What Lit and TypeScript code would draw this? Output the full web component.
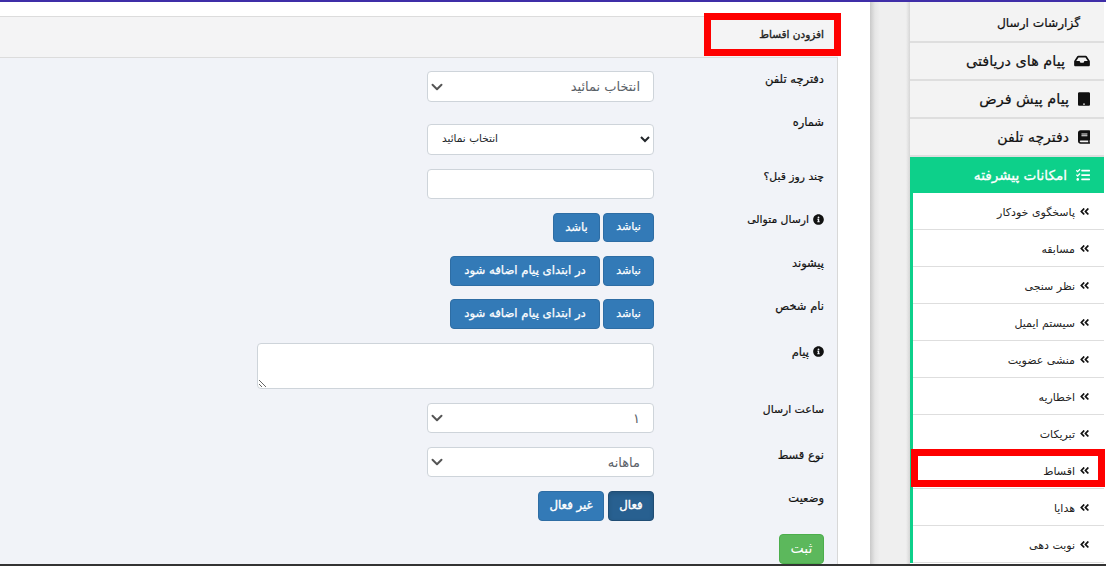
import { LitElement, html, css, svg } from "lit";
import { customElement } from "lit/decorators.js";

const P = {
  inbox: ["0 0 576 512", "M567.938 243.908L462.25 85.374A48.003 48.003 0 0 0 422.311 64H153.689a48 48 0 0 0-39.938 21.374L8.062 243.908A47.994 47.994 0 0 0 0 270.533V400c0 26.51 21.49 48 48 48h480c26.51 0 48-21.49 48-48V270.533a47.994 47.994 0 0 0-8.062-26.625zM162.252 128h251.497l85.333 128H376l-32 64H232l-32-64H76.918l85.334-128z"],
  tablet: ["0 0 448 512", "M400 0H48C21.5 0 0 21.5 0 48v416c0 26.5 21.5 48 48 48h352c26.5 0 48-21.5 48-48V48c0-26.5-21.5-48-48-48zM224 480c-17.7 0-32-14.3-32-32s14.3-32 32-32 32 14.3 32 32-14.3 32-32 32z"],
  book: ["0 0 448 512", "M448 360V24c0-13.3-10.7-24-24-24H96C43 0 0 43 0 96v320c0 53 43 96 96 96h328c13.3 0 24-10.7 24-24v-16c0-7.5-3.5-14.3-8.9-18.7-4.2-15.4-4.2-59.3 0-74.7 5.4-4.3 8.9-11.1 8.9-18.6zM128 134c0-3.3 2.7-6 6-6h212c3.3 0 6 2.7 6 6v20c0 3.3-2.7 6-6 6H134c-3.3 0-6-2.7-6-6v-20zm0 64c0-3.3 2.7-6 6-6h212c3.3 0 6 2.7 6 6v20c0 3.3-2.7 6-6 6H134c-3.3 0-6-2.7-6-6v-20zm253.4 250H96c-17.7 0-32-14.3-32-32 0-17.6 14.4-32 32-32h285.4c-1.9 17.1-1.9 46.9 0 64z"],
  tasks: ["0 0 512 512", "M139.61 35.5a12 12 0 0 0-17 0L58.93 98.81l-22.7-22.12a12 12 0 0 0-17 0L3.53 92.41a12 12 0 0 0 0 17l47.59 47.4a12.78 12.78 0 0 0 17.61 0l15.59-15.62L156.52 69a12.09 12.09 0 0 0 .09-17zm0 159.19a12 12 0 0 0-17 0l-63.68 63.72-22.7-22.1a12 12 0 0 0-17 0L3.53 252a12 12 0 0 0 0 17L51 316.5a12.77 12.77 0 0 0 17.6 0l15.7-15.69 72.2-72.22a12 12 0 0 0 .09-16.9zM64 368c-26.49 0-48.59 21.5-48.59 48S37.53 464 64 464a48 48 0 0 0 0-96zm432 16H208a16 16 0 0 0-16 16v32a16 16 0 0 0 16 16h288a16 16 0 0 0 16-16v-32a16 16 0 0 0-16-16zm0-320H208a16 16 0 0 0-16 16v32a16 16 0 0 0 16 16h288a16 16 0 0 0 16-16V80a16 16 0 0 0-16-16zm0 160H208a16 16 0 0 0-16 16v32a16 16 0 0 0 16 16h288a16 16 0 0 0 16-16v-32a16 16 0 0 0-16-16z"],
  info: ["0 0 512 512", "M256 8C119.043 8 8 119.083 8 256c0 136.997 111.043 248 248 248s248-111.003 248-248C504 119.083 392.957 8 256 8zm0 110c23.196 0 42 18.804 42 42s-18.804 42-42 42-42-18.804-42-42 18.804-42 42-42zm56 254c0 6.627-5.373 12-12 12h-88c-6.627 0-12-5.373-12-12v-24c0-6.627 5.373-12 12-12h12v-64h-12c-6.627 0-12-5.373-12-12v-24c0-6.627 5.373-12 12-12h64c6.627 0 12 5.373 12 12v100h12c6.627 0 12 5.373 12 12v24z"],
  dbl: ["0 0 448 512", "M223.7 239l136-136c9.4-9.4 24.6-9.4 33.9 0l22.6 22.6c9.4 9.4 9.4 24.6 0 33.9L319.9 256l96.4 96.4c9.4 9.4 9.4 24.6 0 33.9L393.7 409c-9.4 9.4-24.6 9.4-33.9 0l-136-136c-9.5-9.4-9.5-24.6-.1-34zm-192 34l136 136c9.4 9.4 24.6 9.4 33.9 0l22.6-22.6c9.4-9.4 9.4-24.6 0-33.9L127.9 256l96.4-96.4c9.4-9.4 9.4-24.6 0-33.9L201.7 103c-9.4-9.4-24.6-9.4-33.9 0l-136 136c-9.5 9.4-9.5 24.6-.1 34z"],
};
type IconName = keyof typeof P;
const icon = (n: IconName, cls: string) =>
  html`<svg class=${cls} viewBox=${P[n][0]} fill="currentColor">${svg`<path d=${P[n][1]}></path>`}</svg>`;

const chevron = html`<svg class="chev" viewBox="0 0 16 16" fill="none" stroke="#555" stroke-width="2.6" stroke-linecap="round" stroke-linejoin="round"><path d="M2 5l6 6 6-6"></path></svg>`;
const fakeSelect = (t: string, cls = "") => html`<div class="sel ${cls}"><span>${t}</span>${chevron}</div>`;
const subs = ["پاسخگوی خودکار", "مسابقه", "نظر سنجی", "سیستم ایمیل", "منشی عضویت", "اخطاریه", "تبریکات", "اقساط", "هدایا", "نوبت دهی"];

@customElement("app-root")
export class AppRoot extends LitElement {
  static styles = css`
    :host { display: flex; flex-direction: column; width: 1106px; height: 566px; overflow: hidden; background: #fff; font-family: "DejaVu Sans", "Liberation Sans", sans-serif; color: #212529; position: relative; }
    .top { height: 2px; background: #3f2ea8; flex: none; }
    .content { flex: 1; min-height: 0; display: flex; overflow: hidden; }
    .bottom { height: 2px; flex: none; background: #333; }
    .main { width: 838px; flex: none; padding-top: 14px; direction: rtl; }
    .head { height: 40px; box-sizing: content-box; background: #f4f4f5; border-top: 1px solid #dcdcdc; border-bottom: 1px solid #dcdcdc; display: flex; align-items: center; padding-right: 14px; font-size: 10.5px; color: #222; -webkit-text-stroke: .35px #222; position: relative; }
    .head span { margin-bottom: 6px; }
    .mark { position: absolute; border: 7px solid #fe0000; box-sizing: border-box; pointer-events: none; }
    .mark.a { right: -3px; top: -4px; width: 137px; height: 43px; }
    .body { background: #f1f3f8; border-right: 1px solid #d8d8d8; padding: 13px 13px 0 0; height: 520px; box-sizing: border-box; }
    .row { display: flex; margin-bottom: 14px; }
    .row.g22 { margin-bottom: 22px; }
    .row.g13 { margin-bottom: 13px; }
    .lbl { width: 170px; flex: none; font-size: 11.5px; line-height: 18px; color: #111; -webkit-text-stroke: .2px #111; display: flex; gap: 4px; align-items: flex-start; margin-top: -2px; }
    .lbl.nar { font-size: 10.8px; }
    .info { width: 11px; height: 11px; margin-top: 3px; flex: none; }
    .lbl.first { margin-top: -1px; }
    .lbl.up { margin-top: -11px; }
    .lbl.z1 { margin-top: -1px; }
    .lbl.z0 { margin-top: 0; }
    .sel, .inp, select, textarea { width: 227px; box-sizing: border-box; border: 1px solid #ced4da; border-radius: 4px; background: #fff; font: inherit; }
    .sel { height: 31px; display: flex; align-items: center; justify-content: space-between; padding: 0 13px 0 3px; font-size: 13px; color: #5a6168; }
    .sel.h30 { height: 30px; }
    .chev { width: 12px; height: 12px; flex: none; }
    select { height: 31px; direction: ltr; font-size: 10.5px; color: #212529; padding: 0 10px 3px; display: block; text-align: left; }
    .inp { height: 30px; display: block; }
    textarea { width: 397px; height: 46px; display: block; resize: both; }
    .btns { display: flex; gap: 3px; }
    .btns.g4 { gap: 4px; }
    .btn { height: 30px; box-sizing: border-box; border: 1px solid #2e6da4; border-radius: 4px; background: #337ab7; color: #fff; font: inherit; font-size: 11.7px; -webkit-text-stroke: .25px #fff; padding: 0 0 2px; display: flex; align-items: center; justify-content: center; }
    .btn.h29 { height: 29px; }
    .w51 { width: 51px; font-size: 11px; }
    .w47 { width: 47px; }
    .w150 { width: 150px; }
    .w46 { width: 46px; }
    .w66 { width: 66px; }
    .strong { -webkit-text-stroke: .4px #fff; }
    .btn.active { background: #286090; border-color: #204d74; box-shadow: inset 0 2px 4px rgba(0,0,0,.13); }
    .save { background: #5cb85c; border-color: #4cae4c; width: 45px; padding: 0 0 3px; font-size: 14px; -webkit-text-stroke: 0; }
    .gap { width: 32px; flex: none; }
    .gutter { width: 40px; flex: none; background: linear-gradient(to right, #c9c9c9 0, #e6e6e6 5px, #efefef 10px, #efefef 36px, #d6d6d6 40px); }
    .side { width: 194px; flex: none; direction: rtl; font-size: 14.4px; color: #111; }
    .item { height: 36px; background: #f3f3f3; border-bottom: 2px solid #dedede; display: flex; align-items: center; gap: 9px; padding-right: 14px; -webkit-text-stroke: .2px #111; }
    .item.book { font-size: 14px; }
    .item.first { padding-right: 24px; padding-top: 3px; box-sizing: border-box; height: 41px; font-size: 12.2px; }
    .ic { width: 14px; height: 14px; flex: none; color: #111; }
    .ic.w { width: 16px; }
    .ic.n { width: 12px; }
    .adv { border-left: 3px solid #0dd08a; }
    .adv-head { height: 36px; background: #0dd08a; margin-left: -3px; color: #fff; font-size: 13.6px; -webkit-text-stroke: .3px #fff; display: flex; align-items: center; gap: 9px; padding-right: 14px; }
    .adv-head .ic { color: #fff; }
    .sub { height: 36px; background: #fff; border-bottom: 1px solid #dedede; display: flex; align-items: center; gap: 4px; padding-right: 14px; font-size: 11px; color: #222; position: relative; }
    .sub span { margin-top: 2px; }
    .dbl { width: 11px; height: 11px; flex: none; color: #111; }
    .mark.b { left: -2px; right: -1px; top: -3px; height: 38px; }
  `;

  render() {
    return html`
      <div class="top"></div>
      <div class="content">
        <section class="main">
          <div class="head"><span>افزودن اقساط</span><div class="mark a"></div></div>
          <div class="body">
            <div class="row g22"><div class="lbl first">دفترچه تلفن</div>${fakeSelect("انتخاب نمائید")}</div>
            <div class="row"><div class="lbl up">شماره</div><select><option>انتخاب نمائید</option></select></div>
            <div class="row"><div class="lbl z1 nar">چند روز قبل؟</div><input class="inp" /></div>
            <div class="row"><div class="lbl nar">${icon("info", "info")}ارسال متوالی</div><div class="btns"><div class="btn h29 w51">نباشد</div><div class="btn h29 w47">باشد</div></div></div>
            <div class="row g13"><div class="lbl">پیشوند</div><div class="btns"><div class="btn w51">نباشد</div><div class="btn w150">در ابتدای پیام اضافه شود</div></div></div>
            <div class="row"><div class="lbl">نام شخص</div><div class="btns"><div class="btn w51">نباشد</div><div class="btn w150">در ابتدای پیام اضافه شود</div></div></div>
            <div class="row"><div class="lbl z0">${icon("info", "info")}پیام</div><textarea></textarea></div>
            <div class="row"><div class="lbl nar">ساعت ارسال</div>${fakeSelect("۱", "h30")}</div>
            <div class="row"><div class="lbl z1">نوع قسط</div>${fakeSelect("ماهانه", "h30")}</div>
            <div class="row g13"><div class="lbl">وضعیت</div><div class="btns g4"><div class="btn active w46 strong">فعال</div><div class="btn w66 strong">غیر فعال</div></div></div>
            <div class="btn save">ثبت</div>
          </div>
        </section>
        <div class="gap"></div>
        <div class="gutter"></div>
        <nav class="side">
          <div class="item first">گزارشات ارسال</div>
          <div class="item">${icon("inbox", "ic w")}پیام های دریافتی</div>
          <div class="item">${icon("tablet", "ic n")}پیام پیش فرض</div>
          <div class="item book">${icon("book", "ic n")}دفترچه تلفن</div>
          <div class="adv">
            <div class="adv-head">${icon("tasks", "ic")}امکانات پیشرفته</div>
            ${subs.map((s) => html`<div class="sub">${icon("dbl", "dbl")}<span>${s}</span>${s === "اقساط" ? html`<div class="mark b"></div>` : ""}</div>`)}
          </div>
        </nav>
      </div>
      <div class="bottom"></div>
    `;
  }
}
